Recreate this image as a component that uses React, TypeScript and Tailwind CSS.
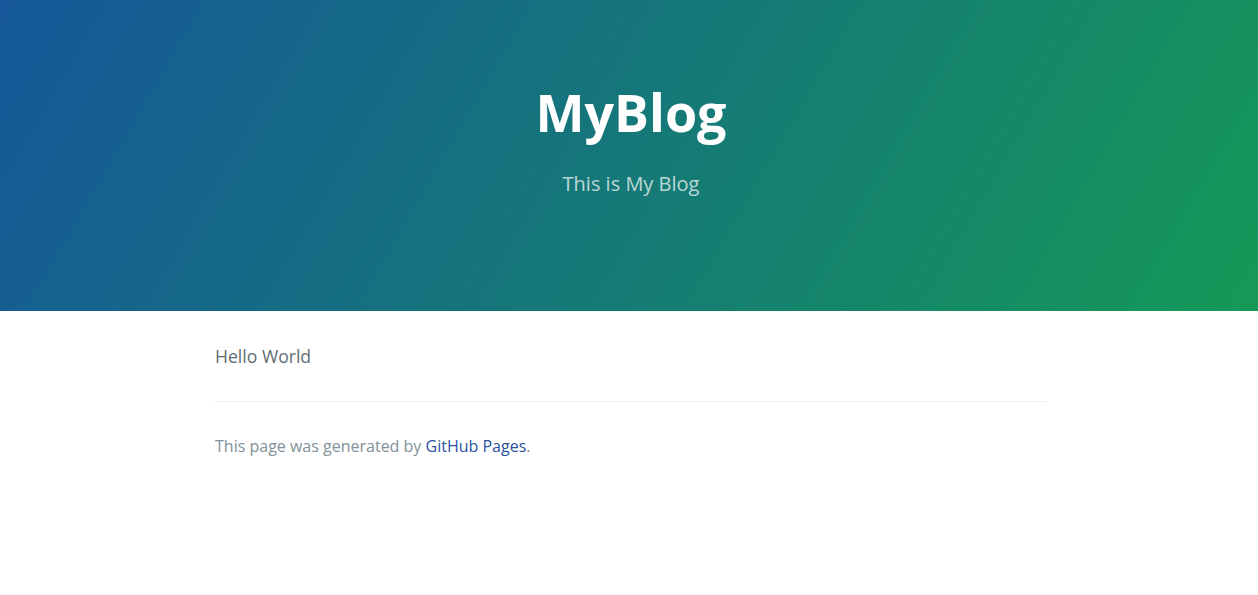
export default function App() {
  return (
    <div className="min-h-[595px] bg-white" style={{ fontFamily: '"Open Sans", "Helvetica Neue", Arial, sans-serif' }}>
      <section className="bg-[linear-gradient(120deg,#155799,#159957)] text-white text-center pt-[73px] pb-[80px] pl-[100px] pr-[96px]">
        <h1 className="text-[52px] leading-[1.5] font-bold m-0 mb-[1.6px]">MyBlog</h1>
        <h2 className="text-[20px] leading-[1.5] font-normal opacity-70 mt-[18px] mb-[32px]">This is My Blog</h2>
      </section>
      <section className="ml-[215px] w-[832px] pt-[32px] text-[17.6px] leading-[1.5] text-[#606c71]">
        <p className="mb-[16px]">Hello World</p>
        <footer className="mt-[32px] pt-[32px] border-t border-[#eff0f1] text-[16px] text-[#819198]">
          This page was generated by <a href="#" className="text-[#2a52a3]">GitHub Pages</a>.
        </footer>
      </section>
    </div>
  );
}
